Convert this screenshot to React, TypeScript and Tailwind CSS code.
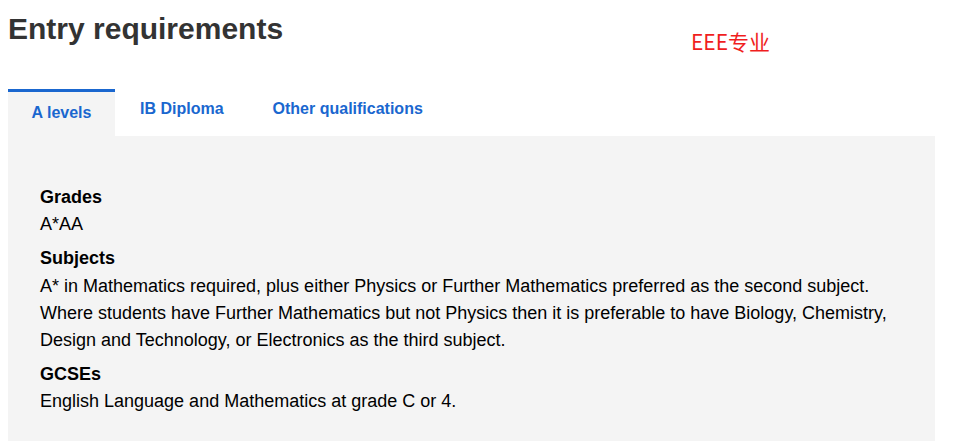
export default function App() {
  const f = { fontFamily: '"Liberation Sans", Arial, sans-serif' };
  return (
    <div className="w-[957px] h-[441px] bg-white overflow-hidden relative" style={f}>
      <div className="px-2">
        <h1 className="text-[30px] leading-[34px] font-bold text-[#333] pt-[12px]">Entry requirements</h1>
        <div className="absolute left-[691px] top-[27px] text-[21px] leading-[28px] text-[#f01e1e]" style={{ fontFamily: '"Noto Sans CJK SC", sans-serif' }}>EEE专业</div>
        <div className="flex mt-[43px] w-[927px]">
          <div className="w-[107px] h-[47px] bg-[#f4f4f4] border-t-[3px] border-[#1a67cf] flex justify-center pt-[11px] text-[16px] leading-[20px] font-bold text-[#1a67cf]">A levels</div>
          <div className="pl-[25px] pt-[10px] text-[16px] leading-[20px] font-bold text-[#1a67cf]">IB Diploma</div>
          <div className="pl-[49px] pt-[10px] text-[16px] leading-[20px] font-bold text-[#1a67cf]">Other qualifications</div>
        </div>
        <div className="w-[927px] h-[320px] bg-[#f4f4f4] pl-[32px] pt-[48px] text-[18px] leading-[27.2px] text-black">
          <div className="font-bold">Grades</div>
          <div>A*AA</div>
          <div className="font-bold mt-[7px]">Subjects</div>
          <div className="w-[870px]">A* in Mathematics required, plus either Physics or Further Mathematics preferred as the second subject. Where students have Further Mathematics but not Physics then it is preferable to have Biology, Chemistry, Design and Technology, or Electronics as the third subject.</div>
          <div className="font-bold mt-[7px]">GCSEs</div>
          <div>English Language and Mathematics at grade C or 4.</div>
        </div>
      </div>
    </div>
  );
}
